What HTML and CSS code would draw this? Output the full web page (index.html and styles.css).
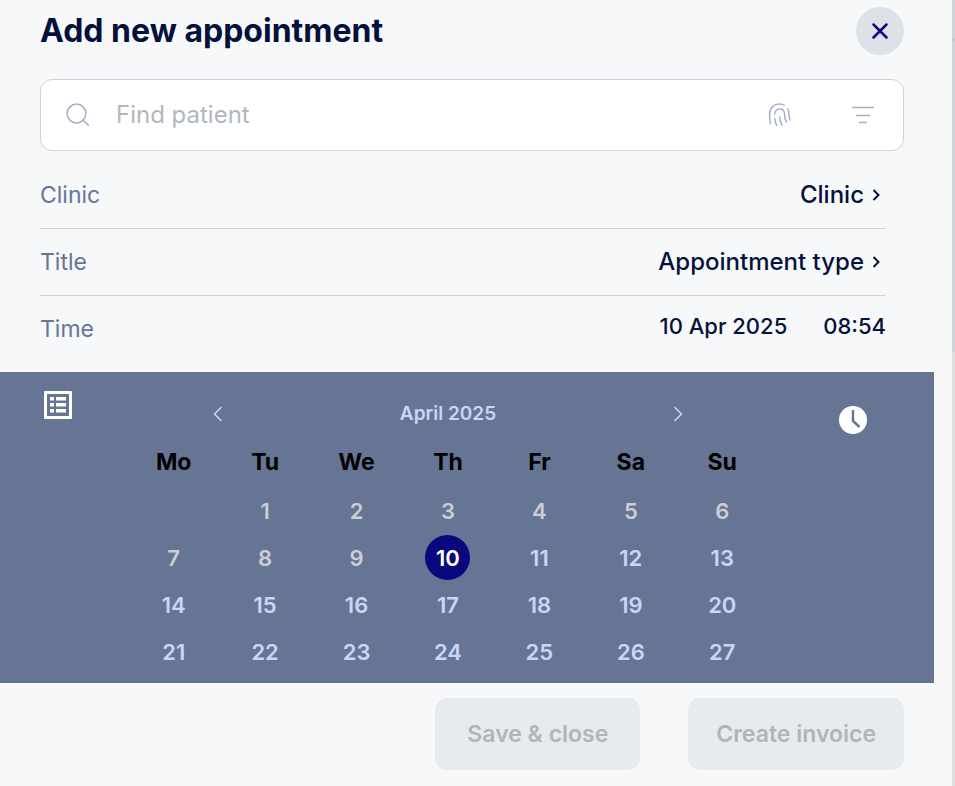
FILE: index.html
```html
<!DOCTYPE html>
<html lang="en">
<head>
<meta charset="utf-8">
<meta name="viewport" content="width=device-width, initial-scale=1">
<title>Add new appointment</title>
<link rel="stylesheet" href="styles.css">
</head>
<body>
<main class="panel">
  <header class="header">
    <h1>Add new appointment</h1>
    <button class="close" type="button" aria-label="Close">
      <svg width="16" height="16" viewBox="0 0 16 16"><path d="M1.500 1.500l13 13M14.500 1.500l-13 13"/></svg>
    </button>
  </header>

  <div class="search">
    <svg class="line-icon" width="24" height="24" viewBox="0 0 24 24"><circle cx="10.500" cy="10.500" r="9.400"/><path d="M17.200 17.200l5.600 5.600"/></svg>
    <input type="text" placeholder="Find patient" aria-label="Find patient">
    <button type="button" aria-label="Scan fingerprint">
      <svg class="line-icon" width="24" height="24" viewBox="0 0 24 24"><path d="M2.600 21.200C1.700 18 1.600 14.500 1.600 11C1.600 4.800 6 1 11.500 1C13.800 1 15.500 1.500 17 2.500"/><path d="M6.600 11.500C6.600 8 8.800 5.900 11.600 5.900C14.600 5.900 16.500 8 16.500 11C16.500 14.500 17.200 17.200 18.600 19.700"/><path d="M19.300 5.500C20.800 7.300 21.100 9.500 21.100 11.500C21.100 13.800 21.400 15.700 22.200 17.500"/><path d="M6.700 15C6.900 18 7.500 20.500 9 23"/><path d="M11.600 13.500C11.700 17 12.500 20 14.300 22.500"/></svg>
    </button>
    <button type="button" aria-label="Filter">
      <svg class="line-icon" width="24" height="24" viewBox="0 0 24 24"><path d="M1 4.500h22M5 12.500h14M8 19.500h8"/></svg>
    </button>
  </div>

  <section class="fields">
    <div class="field">
      <span class="label">Clinic</span>
      <button class="choice" type="button">Clinic
        <svg width="8" height="12" viewBox="0 0 8 12"><path d="M1.500 1l5 5-5 5"/></svg></button>
    </div>
    <div class="field">
      <span class="label">Title</span>
      <button class="choice" type="button">Appointment type
        <svg width="8" height="12" viewBox="0 0 8 12"><path d="M1.500 1l5 5-5 5"/></svg></button>
    </div>
    <div class="field time">
      <span class="label">Time</span>
      <div class="when">
        <button type="button">10 Apr 2025</button>
        <button type="button">08:54</button>
      </div>
    </div>
  </section>

  <section class="calendar">
    <div class="side">
      <button type="button" aria-label="List view">
        <svg width="28" height="28" viewBox="0 0 28 28"><path fill="#fff" fill-rule="evenodd" d="M1 0h26a1 1 0 0 1 1 1v26a1 1 0 0 1-1 1H1a1 1 0 0 1-1-1V1a1 1 0 0 1 1-1zM3 3v22h22V3zM6 6h4v3.500H6zM12 6h10v3.500H12zM6 12h4v3.500H6zM12 12h10v3.500H12zM6 18h4v3.500H6zM12 18h10v3.500H12z"/></svg>
      </button>
    </div>
    <div class="month">
      <div class="nav">
        <button type="button" aria-label="Previous month"><svg width="10" height="16" viewBox="0 0 10 16"><path d="M8.500 1l-7 7 7 7"/></svg></button>
        <h2>April 2025</h2>
        <button type="button" aria-label="Next month"><svg width="10" height="16" viewBox="0 0 10 16"><path d="M1.500 1l7 7-7 7"/></svg></button>
      </div>
      <table>
        <thead><tr><th>Mo</th><th>Tu</th><th>We</th><th>Th</th><th>Fr</th><th>Sa</th><th>Su</th></tr></thead>
        <tbody>
          <tr><td></td><td><button disabled>1</button></td><td><button disabled>2</button></td><td><button disabled>3</button></td><td><button disabled>4</button></td><td><button disabled>5</button></td><td><button disabled>6</button></td></tr>
          <tr><td><button disabled>7</button></td><td><button disabled>8</button></td><td><button disabled>9</button></td><td><button class="selected">10</button></td><td><button>11</button></td><td><button>12</button></td><td><button>13</button></td></tr>
          <tr><td><button>14</button></td><td><button>15</button></td><td><button>16</button></td><td><button>17</button></td><td><button>18</button></td><td><button>19</button></td><td><button>20</button></td></tr>
          <tr><td><button>21</button></td><td><button>22</button></td><td><button>23</button></td><td><button>24</button></td><td><button>25</button></td><td><button>26</button></td><td><button>27</button></td></tr>
        </tbody>
      </table>
    </div>
    <div class="side clock">
      <button type="button" aria-label="Choose time">
        <svg width="28" height="28" viewBox="0 0 28 28"><circle cx="14" cy="14" r="14" fill="#fff"/><path d="M14 4v11l6.500 6" fill="none" stroke="#677595" stroke-width="2.400"/></svg>
      </button>
    </div>
  </section>

  <footer class="actions">
    <button class="save" type="button" disabled>Save &amp; close</button>
    <button type="button" disabled>Create invoice</button>
  </footer>
</main>
<aside class="edge"><div class="edge-top"></div><div class="edge-body"></div></aside>
</body>
</html>
```

FILE: styles.css
```css
* { box-sizing: border-box; }
body {
  margin: 0;
  display: flex;
  min-height: 100vh;
  background: #f7f8fa;
  color: #04123b;
  font-family: Inter, "Liberation Sans", sans-serif;
  font-size: 23px;
  line-height: 32px;
}
button, input { font: inherit; color: inherit; border: 0; background: none; padding: 0; margin: 0; }
svg { display: block; }
h1, h2 { margin: 0; }

.panel { flex: 1; min-width: 0; }
.header {
  display: flex;
  align-items: center;
  justify-content: space-between;
  padding: 7px 48px 24px 40px;
}
h1 { font-size: 32px; line-height: 48px; font-weight: 700; }
.close {
  display: grid;
  place-items: center;
  width: 48px;
  height: 48px;
  border-radius: 50%;
  background: #dfe1e9;
}
.close svg { fill: none; stroke: #0a0b80; stroke-width: 2.5; stroke-linecap: round; }

.search {
  display: flex;
  align-items: center;
  height: 72px;
  margin: 0 48px 11px 40px;
  padding: 0 28px 0 25px;
  border: 1px solid #ced2d9;
  border-radius: 12px;
  background: #fff;
}
.search input { flex: 1; min-width: 0; margin-left: 26px; outline: 0; font-size: 24px; }
.search input::placeholder { color: #b0b8bf; opacity: 1; }
.search button + button { margin-left: 59px; }
.line-icon { fill: none; stroke: #a4aec6; stroke-width: 1.5; }

.fields { margin: 0 66px 0 40px; }
.field {
  display: flex;
  align-items: center;
  justify-content: space-between;
  height: 67px;
  border-bottom: 1px solid #ced1d6;
}
.label { color: #66759a; }
.choice {
  display: flex;
  align-items: center;
  gap: 8px;
  padding-right: 6px;
  font-size: 24px;
  font-weight: 500;
}
.choice svg { fill: none; stroke: #04123b; stroke-width: 2; }
.time { height: 76px; padding-bottom: 10px; border: 0; }
.when { display: flex; gap: 36px; padding-bottom: 6px; font-size: 22px; font-weight: 500; }

.calendar {
  display: flex;
  margin-right: 18px;
  padding-bottom: 8px;
  background: #677595;
}
.side { width: 128px; padding: 19px 0 0 44px; }
.clock { width: 166px; padding: 34px 0 0 71px; }
.month { flex: 1; }
.nav {
  display: flex;
  align-items: center;
  justify-content: space-between;
  padding: 26px 85px 16px;
  color: #c9d6f5;
}
.nav svg { fill: none; stroke: #c9d6f5; stroke-width: 1.5; }
h2 { font-size: 19px; line-height: 32px; font-weight: 600; }
table { width: 100%; table-layout: fixed; border-collapse: collapse; }
th, td { padding: 0; text-align: center; }
th { height: 41px; padding-bottom: 9px; color: #000; font-weight: 700; }
td { height: 47px; }
td button {
  width: 45px;
  height: 45px;
  border-radius: 50%;
  color: #c9d6f5;
  font-size: 22px;
  font-weight: 600;
}
td button:disabled { color: #ccced2; }
td .selected { background: #09097d; color: #fff; }

.actions {
  display: flex;
  justify-content: flex-end;
  gap: 48px;
  padding: 15px 48px 16px 40px;
}
.actions button {
  height: 72px;
  padding: 0 28px;
  border-radius: 12px;
  background: #e8ebee;
  color: #adb5bd;
  font-weight: 600;
}
.actions .save { padding: 0 32px; }
.edge { width: 3px; background: #dedede; }
.edge-top { height: 38px; background: #d2d4dc; }
.edge-body { height: 314px; border-top: 3px solid #c7cad2; background: #cfd1db; }
```
